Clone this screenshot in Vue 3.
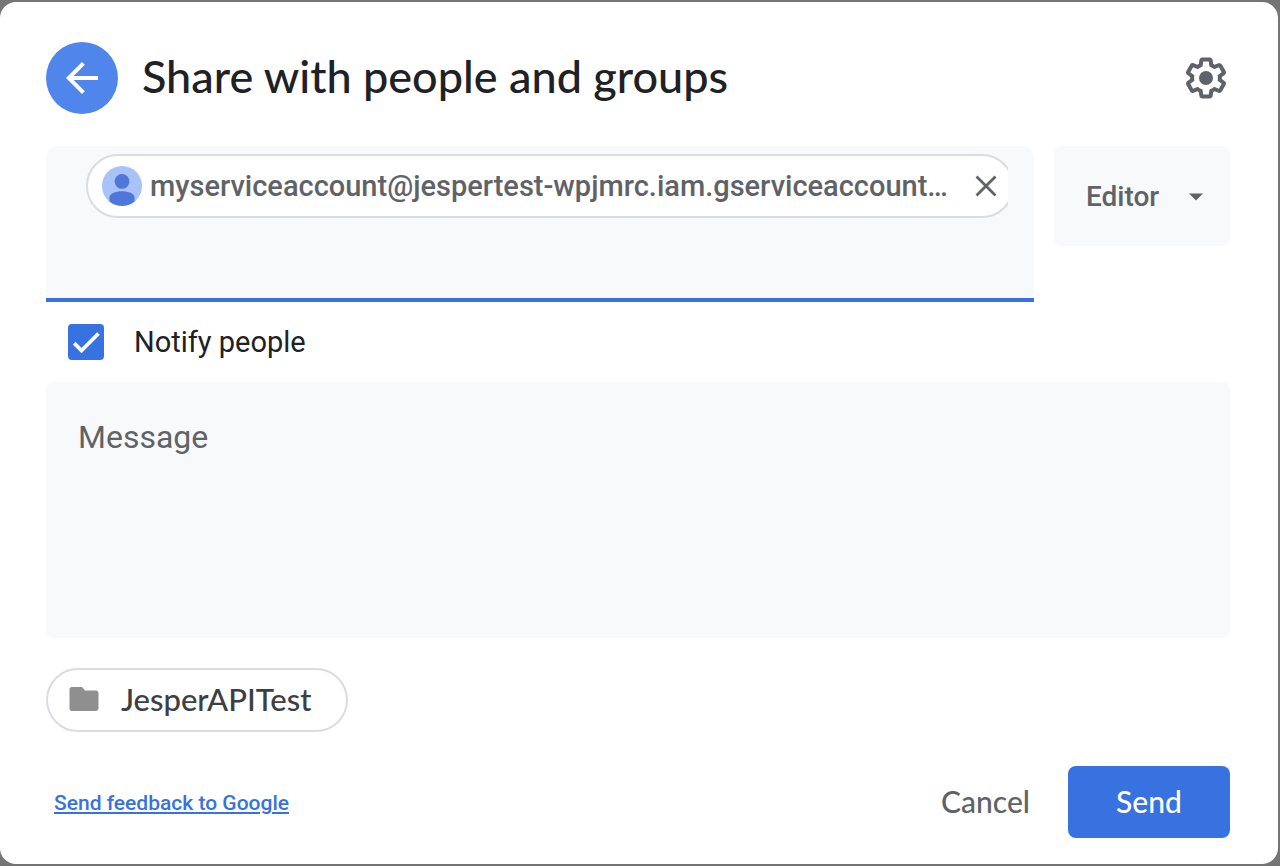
<script setup>
import { ref } from 'vue'

const role = ref('Editor')
const notify = ref(true)
const message = ref('')
const query = ref('')
const recipients = ref(['myserviceaccount@jespertest-wpjmrc.iam.gserviceaccount…'])

function removeRecipient(index) {
  recipients.value.splice(index, 1)
}
</script>

<template>
  <main class="dialog" role="dialog" aria-labelledby="dialog-title">
    <header class="header">
      <button class="back" type="button" aria-label="Back">
        <svg viewBox="0 0 24 24" width="48" height="48" aria-hidden="true">
          <path d="M20 11H7.83l5.59-5.59L12 4l-8 8 8 8 1.41-1.41L7.83 13H20v-2z" fill="#fff" />
        </svg>
      </button>
      <h1 id="dialog-title" class="title">Share with people and groups</h1>
      <button class="settings" type="button" aria-label="Settings">
        <svg viewBox="0 0 24 24" width="48" height="48" fill="#5f6368" aria-hidden="true">
          <path d="M13.85 22.25h-3.7c-.74 0-1.36-.54-1.45-1.27l-.27-1.89c-.27-.14-.53-.29-.79-.46l-1.8.72c-.7.26-1.47-.03-1.81-.65L2.2 15.53c-.35-.66-.2-1.44.36-1.88l1.53-1.19c-.01-.15-.02-.3-.02-.46 0-.15.01-.31.02-.46l-1.52-1.19c-.59-.45-.74-1.26-.37-1.88l1.85-3.19c.34-.62 1.11-.9 1.79-.63l1.81.73c.26-.17.52-.32.78-.46l.27-1.91c.09-.7.71-1.25 1.44-1.25h3.7c.74 0 1.36.54 1.45 1.27l.27 1.89c.27.14.53.29.79.46l1.8-.72c.71-.26 1.48.03 1.82.65l1.84 3.18c.36.66.2 1.44-.36 1.88l-1.52 1.19c.01.15.02.3.02.46s-.01.31-.02.46l1.52 1.19c.56.45.72 1.23.37 1.86l-1.86 3.22c-.34.62-1.11.9-1.8.63l-1.8-.72c-.26.17-.52.32-.78.46l-.27 1.91c-.1.68-.72 1.22-1.46 1.22zm-3.23-2h2.76l.37-2.55.53-.22c.44-.18.88-.44 1.34-.78l.45-.34 2.38.96 1.38-2.4-2.03-1.58.07-.56c.03-.26.06-.51.06-.78s-.03-.53-.06-.78l-.07-.56 2.03-1.58-1.39-2.4-2.39.96-.45-.35c-.42-.32-.87-.58-1.33-.77l-.52-.22-.37-2.55h-2.76l-.37 2.55-.53.21c-.44.19-.88.44-1.34.79l-.45.33-2.38-.95-1.39 2.39 2.03 1.58-.07.56a7 7 0 0 0-.06.79c0 .26.02.53.06.78l.07.56-2.03 1.58 1.38 2.4 2.39-.96.45.35c.43.33.86.58 1.33.77l.53.22.38 2.55z" />
          <circle cx="12" cy="12" r="3.5" />
        </svg>
      </button>
    </header>

    <div class="people">
      <div class="recipients">
        <div class="chips">
          <div v-for="(email, i) in recipients" :key="email" class="chip">
            <svg viewBox="0 0 40 40" width="40" height="40" aria-hidden="true">
              <circle cx="20" cy="20" r="20" fill="#a8c3f9" />
              <circle cx="20" cy="15.4" r="7.4" fill="#4f76d9" />
              <path d="M7.500 35.600V31c0-3.600 6.200-5.800 12.500-5.800S32.500 27.400 32.500 31v4.600a20 20 0 0 1-25 0z" fill="#4f76d9" />
            </svg>
            <span class="email">{{ email }}</span>
            <button class="remove" type="button" aria-label="Remove" @click="removeRecipient(i)">
              <svg viewBox="0 0 24 24" width="24" height="24" aria-hidden="true">
                <path d="M2.500 2.500l19 19M21.500 2.500l-19 19" stroke="#5f6368" stroke-width="2.800" fill="none" />
              </svg>
            </button>
          </div>
        </div>
        <input v-model="query" class="query" type="text" aria-label="Add people and groups" />
      </div>
      <div class="role">
        <select v-model="role" class="role-select" aria-label="Role">
          <option>Viewer</option>
          <option>Commenter</option>
          <option>Editor</option>
        </select>
        <svg class="caret" viewBox="0 0 14 8" width="14" height="8" aria-hidden="true">
          <path d="M0 0.500h14L7 7.500z" fill="#5f6368" />
        </svg>
      </div>
    </div>

    <label class="notify">
      <span class="box">
        <input v-model="notify" class="check" type="checkbox" />
        <svg v-if="notify" class="tick" viewBox="0 0 36 36" width="36" height="36" aria-hidden="true">
          <path d="M6.200 19.200l7.300 7.300L30.500 9.500" stroke="#fff" stroke-width="3.800" fill="none" />
        </svg>
      </span>
      <span>Notify people</span>
    </label>

    <textarea v-model="message" class="message" placeholder="Message" aria-label="Message"></textarea>

    <div class="item">
      <svg viewBox="0 0 30 26" width="30" height="26" aria-hidden="true">
        <path d="M3 1h10l3 3.500h10.500a3 3 0 0 1 3 3V22a3 3 0 0 1-3 3H3a2.500 2.500 0 0 1-2.500-2.500v-19A2.500 2.500 0 0 1 3 1z" fill="#8f8f8f" />
      </svg>
      <span>JesperAPITest</span>
    </div>

    <footer class="footer">
      <a class="feedback" href="#">Send feedback to Google</a>
      <button class="cancel" type="button">Cancel</button>
      <button class="send" type="button">Send</button>
    </footer>
  </main>
</template>

<style>
body {
  margin: 0;
  background: #757575;
}
</style>

<style scoped>
.dialog,
.dialog * {
  box-sizing: border-box;
}

.dialog {
  display: flex;
  flex-direction: column;
  margin: 2px 2px 2px 0;
  padding: 40px 48px 26px 46px;
  border-radius: 16px;
  background: #fff;
  color: #202124;
  font-family: Roboto, "Liberation Sans", sans-serif;
  font-size: 29px;
  line-height: 36px;
}

button,
input,
select,
textarea {
  margin: 0;
  padding: 0;
  border: 0;
  background: none;
  color: inherit;
  font: inherit;
  outline: none;
}

button,
select {
  cursor: pointer;
}

svg {
  display: block;
  flex: none;
}

.header {
  display: flex;
  align-items: center;
  gap: 24px;
}

.back {
  display: flex;
  align-items: center;
  justify-content: center;
  width: 72px;
  height: 72px;
  border-radius: 50%;
  background: #5086ec;
}

.title {
  flex: 1;
  margin: 0;
  padding-bottom: 4px;
  font-family: Lato, "Liberation Sans", sans-serif;
  font-size: 45px;
  font-weight: 500;
  line-height: 56px;
}

.people {
  display: flex;
  align-items: flex-start;
  gap: 20px;
  margin-top: 32px;
}

.recipients {
  flex: 1;
  min-width: 0;
  padding: 8px 26px 8px 40px;
  border-bottom: 4px solid #3872e0;
  border-radius: 12px 12px 0 0;
  background: #f8f9fb;
}

.chips {
  overflow: hidden;
}

.chip {
  display: flex;
  align-items: center;
  height: 64px;
  margin-right: -6px;
  padding: 0 14px;
  border: 2px solid #dadce0;
  border-radius: 32px;
  background: #fff;
  color: #5f6368;
  font-weight: 500;
}

.email {
  flex: 1;
  min-width: 0;
  margin-left: 8px;
  overflow: hidden;
  white-space: nowrap;
}

.remove {
  display: flex;
}

.query {
  display: block;
  width: 100%;
  height: 72px;
}

.role {
  position: relative;
  width: 176px;
}

.role-select {
  width: 100%;
  height: 100px;
  padding: 2px 32px 0;
  border-radius: 8px;
  background: #f8f9fb;
  color: #5f6368;
  font-size: 28px;
  font-weight: 500;
  appearance: none;
}

.caret {
  position: absolute;
  top: 47px;
  right: 27px;
  pointer-events: none;
}

.notify {
  display: flex;
  align-items: center;
  gap: 30px;
  margin: 22px 0 22px 22px;
}

.box {
  position: relative;
  width: 36px;
  height: 36px;
}

.check {
  display: block;
  width: 36px;
  height: 36px;
  border: 4px solid #5f6368;
  border-radius: 4px;
  appearance: none;
}

.check:checked {
  border-color: #3872e0;
  background: #3872e0;
}

.tick {
  position: absolute;
  inset: 0;
  pointer-events: none;
}

.message {
  display: block;
  width: 100%;
  height: 256px;
  padding: 35px 32px;
  border-radius: 8px;
  background: #f8f9fb;
  font-size: 32px;
  line-height: 40px;
  resize: none;
}

.message::placeholder {
  color: #5f6368;
  opacity: 1;
}

.item {
  display: flex;
  align-items: center;
  align-self: flex-start;
  gap: 22px;
  height: 64px;
  margin-top: 30px;
  padding: 0 35px 2px 21px;
  border: 2px solid #dadce0;
  border-radius: 32px;
  color: #3c4043;
  font-family: Lato, "Liberation Sans", sans-serif;
  font-size: 31px;
  font-weight: 500;
}

.footer {
  display: flex;
  align-items: center;
  margin-top: 34px;
}

.feedback {
  margin: 0 auto 0 8px;
  padding-top: 2px;
  color: #3872e0;
  font-size: 21px;
  font-weight: 500;
  line-height: 28px;
}

.cancel,
.send {
  height: 72px;
  padding-bottom: 2px;
  font-family: Lato, "Liberation Sans", sans-serif;
  font-size: 30px;
  font-weight: 500;
}

.cancel {
  padding-right: 38px;
  padding-left: 38px;
  color: #5f6368;
}

.send {
  width: 162px;
  border-radius: 8px;
  background: #3872e0;
  color: #fff;
}
</style>
